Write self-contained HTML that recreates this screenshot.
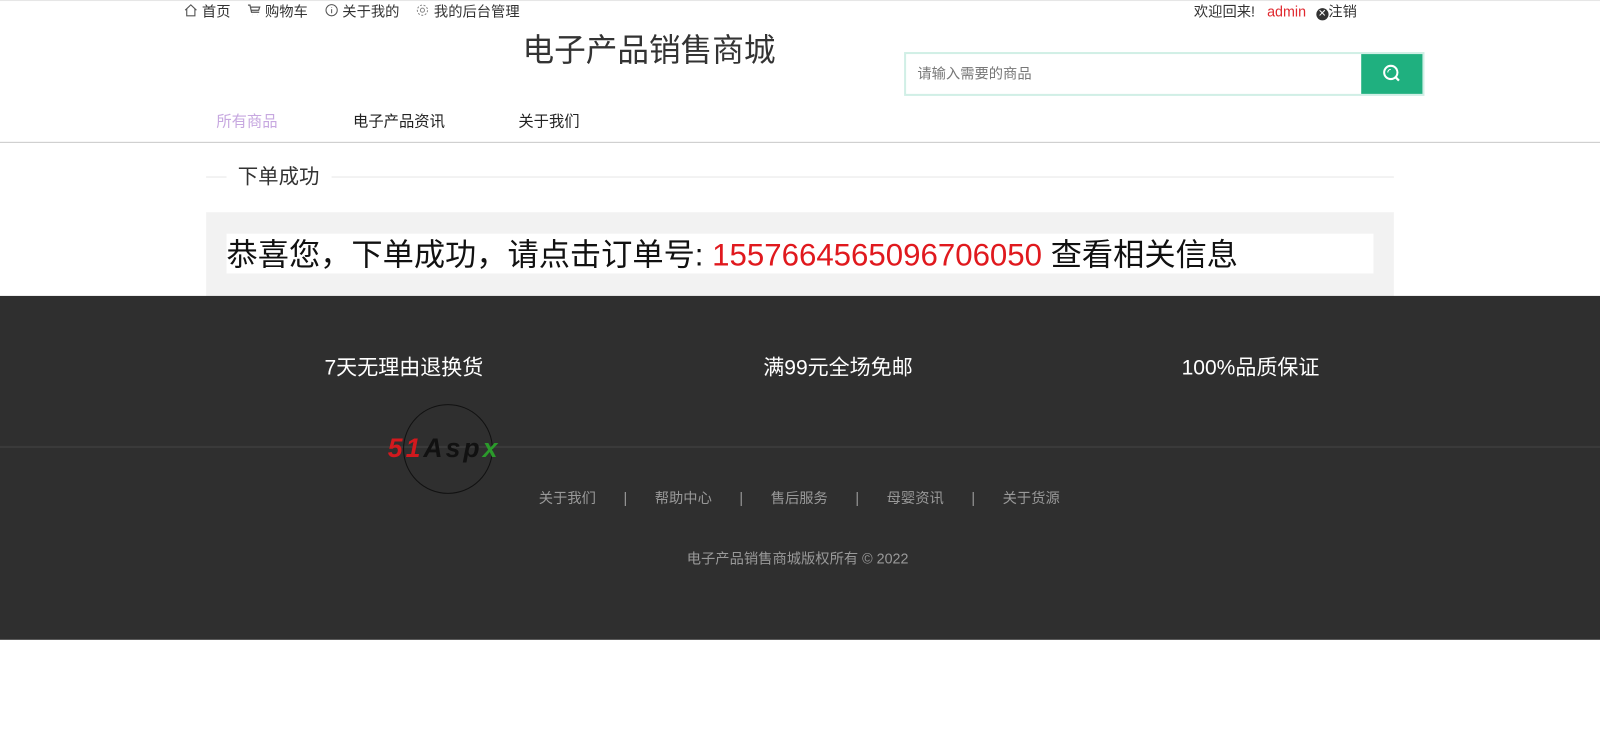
<!DOCTYPE html>
<html><head><meta charset="utf-8"><style>
*{margin:0;padding:0;box-sizing:border-box}
body{width:1600px;height:751px;background:#fff;font-family:"Liberation Sans","Noto Sans CJK SC",sans-serif;position:relative;overflow:hidden;color:#333}
#w{position:absolute;left:0;top:0;width:1568px;height:736px;transform:scale(1.0204);transform-origin:0 0}
.a{position:absolute;white-space:nowrap}
</style></head><body><div id="w">
<div class="a" style="left:0;top:0;width:1600px;height:1px;background:#e6e6e6"></div>
<div class="a" style="left:180px;top:2px;font-size:14px;color:#333;line-height:18px">
<svg width="14" height="14" viewBox="0 0 14 14" style="vertical-align:-1px"><path d="M1.5 7L7 1.8L12.5 7M3 5.8V12.5H11V5.8" fill="none" stroke="#555" stroke-width="1.1"/></svg> 首页
<span style="margin-left:12px"><svg width="14" height="14" viewBox="0 0 14 14" style="vertical-align:-1px"><path d="M1 2H3L4.5 9H12M4 4H12.5L11.5 7H4.5M5 11.5h.1M10.5 11.5h.1" fill="none" stroke="#555" stroke-width="1.2"/></svg> 购物车</span>
<span style="margin-left:12px"><svg width="14" height="14" viewBox="0 0 14 14" style="vertical-align:-1px"><circle cx="7" cy="7" r="5.5" fill="none" stroke="#555"/><path d="M7 6V10M7 4v.5" stroke="#555"/></svg> 关于我的</span>
<span style="margin-left:12px"><svg width="14" height="14" viewBox="0 0 14 14" style="vertical-align:-1px"><circle cx="7" cy="7" r="2" fill="none" stroke="#888"/><circle cx="7" cy="7" r="5" fill="none" stroke="#888" stroke-dasharray="2 1.5"/></svg> 我的后台管理</span>
</div>
<div class="a" style="left:1170px;top:2px;font-size:14px;line-height:18px;color:#333">欢迎回来! <span style="color:#e0282e;margin-left:8px">admin</span> <span style="display:inline-block;width:12px;height:12px;border-radius:6px;background:#333;color:#fff;font-size:10px;line-height:12px;text-align:center;vertical-align:0;margin-left:6px">✕</span>注销</div>
<div class="a" style="left:512px;top:30px;font-size:31px;color:#333;line-height:40px">电子产品销售商城</div>
<div class="a" style="left:886px;top:51px;width:510px;height:43px;border:2px solid #d1efe6;background:#fff"></div>
<div class="a" style="left:899px;top:63px;font-size:14px;color:#777;line-height:18px">请输入需要的商品</div>
<div class="a" style="left:1334px;top:53px;width:60px;height:39px;background:#1fb07f"><svg width="60" height="39" viewBox="0 0 60 39"><circle cx="29" cy="18" r="6.5" fill="none" stroke="#fff" stroke-width="2"/><path d="M33.5 22.5L37 26" stroke="#fff" stroke-width="2.2"/><path d="M26 18a3 3 0 0 1 3-3" stroke="#fff" fill="none"/></svg></div>
<div class="a" style="left:212px;top:111px;font-size:15px;color:#c7a8e0;line-height:18px">所有商品</div>
<div class="a" style="left:346px;top:111px;font-size:15px;color:#222;line-height:18px">电子产品资讯</div>
<div class="a" style="left:508px;top:111px;font-size:15px;color:#222;line-height:18px">关于我们</div>
<div class="a" style="left:0;top:139px;width:1600px;height:1px;background:#c8c8c8"></div>
<div class="a" style="left:202px;top:173px;width:20px;height:1px;background:#e6e6e6"></div>
<div class="a" style="left:325px;top:173px;width:1041px;height:1px;background:#e6e6e6"></div>
<div class="a" style="left:233px;top:162px;font-size:20px;color:#333;line-height:24px">下单成功</div>
<div class="a" style="left:202px;top:208px;width:1164px;height:82px;background:#f2f2f2"></div>
<div class="a" style="left:222px;top:229px;width:1124px;height:39px;background:#fff"></div>
<div class="a" style="left:222px;top:230px;font-size:30.6px;color:#111;line-height:40px">恭喜您，下单成功，请点击订单号: <span style="color:#e0191e">1557664565096706050</span> 查看相关信息</div>
<div class="a" style="left:0;top:290px;width:1600px;height:337px;background:#2f2f2f"></div>
<div class="a" style="left:0;top:437px;width:1600px;height:2px;background:#3a3a3a"></div>
<div class="a" style="left:318px;top:349px;font-size:20.6px;color:#fff;line-height:24px">7天无理由退换货</div>
<div class="a" style="left:748px;top:349px;font-size:20.6px;color:#fff;line-height:24px">满99元全场免邮</div>
<div class="a" style="left:1158px;top:349px;font-size:20.6px;color:#fff;line-height:24px">100%品质保证</div>
<div class="a" style="left:395px;top:396px;width:88px;height:88px;border:1.5px solid #111;border-radius:50%"></div>
<div class="a" style="left:380px;top:424px;font-size:26px;font-weight:bold;font-style:italic;line-height:30px;letter-spacing:3px"><span style="color:#d2191e">51</span><span style="color:#111">Asp</span><span style="color:#2b9a2b">x</span></div>
<div class="a" style="left:528px;top:479px;font-size:14px;color:#999;line-height:18px">关于我们<span style="margin:0 27px">|</span>帮助中心<span style="margin:0 27px">|</span>售后服务<span style="margin:0 27px">|</span>母婴资讯<span style="margin:0 27px">|</span>关于货源</div>
<div class="a" style="left:673px;top:538px;font-size:14px;color:#999;line-height:18px">电子产品销售商城版权所有 © 2022</div>
</div></body></html>
